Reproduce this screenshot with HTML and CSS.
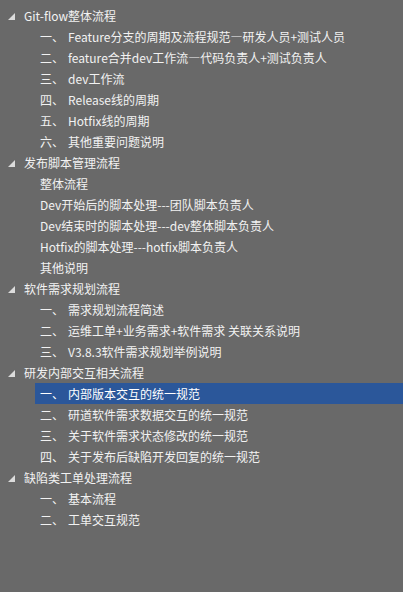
FILE: index.html
```html
<!DOCTYPE html>
<html lang="zh-CN">
<head>
    <meta charset="UTF-8">
    <meta name="viewport" content="width=device-width, initial-scale=1.0">
    <title>导航窗格</title>
    <link rel="stylesheet" href="styles.css">
</head>
<body>
    <ul class="tree">
        <li class="group">
            <div class="head"><span class="caret"><svg viewBox="0 0 7 7" width="7" height="7"><polygon points="7,0 7,7 0,7" /></svg></span>Git-flow整体流程</div>
            <ul>
                <li class="item"><span class="num">一、</span>Feature分支的周期及流程规范—研发人员+测试人员</li>
                <li class="item"><span class="num">二、</span>feature合并dev工作流—代码负责人+测试负责人</li>
                <li class="item"><span class="num">三、</span>dev工作流</li>
                <li class="item"><span class="num">四、</span>Release线的周期</li>
                <li class="item"><span class="num">五、</span>Hotfix线的周期</li>
                <li class="item"><span class="num">六、</span>其他重要问题说明</li>
            </ul>
        </li>
        <li class="group">
            <div class="head"><span class="caret"><svg viewBox="0 0 7 7" width="7" height="7"><polygon points="7,0 7,7 0,7" /></svg></span>发布脚本管理流程</div>
            <ul>
                <li class="item">整体流程</li>
                <li class="item">Dev开始后的脚本处理---团队脚本负责人</li>
                <li class="item">Dev结束时的脚本处理---dev整体脚本负责人</li>
                <li class="item">Hotfix的脚本处理---hotfix脚本负责人</li>
                <li class="item">其他说明</li>
            </ul>
        </li>
        <li class="group">
            <div class="head"><span class="caret"><svg viewBox="0 0 7 7" width="7" height="7"><polygon points="7,0 7,7 0,7" /></svg></span>软件需求规划流程</div>
            <ul>
                <li class="item"><span class="num">一、</span>需求规划流程简述</li>
                <li class="item"><span class="num">二、</span>运维工单+业务需求+软件需求 关联关系说明</li>
                <li class="item"><span class="num">三、</span>V3.8.3软件需求规划举例说明</li>
            </ul>
        </li>
        <li class="group">
            <div class="head"><span class="caret"><svg viewBox="0 0 7 7" width="7" height="7"><polygon points="7,0 7,7 0,7" /></svg></span>研发内部交互相关流程</div>
            <ul>
                <li class="item selected"><span class="num">一、</span>内部版本交互的统一规范</li>
                <li class="item"><span class="num">二、</span>研道软件需求数据交互的统一规范</li>
                <li class="item"><span class="num">三、</span>关于软件需求状态修改的统一规范</li>
                <li class="item"><span class="num">四、</span>关于发布后缺陷开发回复的统一规范</li>
            </ul>
        </li>
        <li class="group">
            <div class="head"><span class="caret"><svg viewBox="0 0 7 7" width="7" height="7"><polygon points="7,0 7,7 0,7" /></svg></span>缺陷类工单处理流程</div>
            <ul>
                <li class="item"><span class="num">一、</span>基本流程</li>
                <li class="item"><span class="num">二、</span>工单交互规范</li>
            </ul>
        </li>
    </ul>
</body>
</html>
```
FILE: styles.css
```css
html, body {
    margin: 0;
    padding: 0;
    height: 100%;
}
body {
    background-color: #696969;
    color: #f2f2f2;
    font-family: "Noto Sans CJK SC", "Microsoft YaHei", sans-serif;
    font-size: 12px;
    overflow: hidden;
}
ul {
    list-style: none;
    margin: 0;
    padding: 0;
}
.tree {
    padding-top: 5px;
}
.head, .item {
    height: 21px;
    display: flex;
    align-items: center;
    white-space: nowrap;
}
.head {
    padding-left: 8px;
}
.caret {
    width: 16px;
    display: flex;
    align-items: center;
    margin-top: 2px;
}
.caret svg {
    fill: #dcdcdc;
}
.item {
    margin-left: 35px;
    padding-left: 5px;
}
.num {
    display: inline-block;
    width: 28px;
    flex-shrink: 0;
}
.selected {
    background-color: #2b579a;
    color: #ffffff;
}
```
